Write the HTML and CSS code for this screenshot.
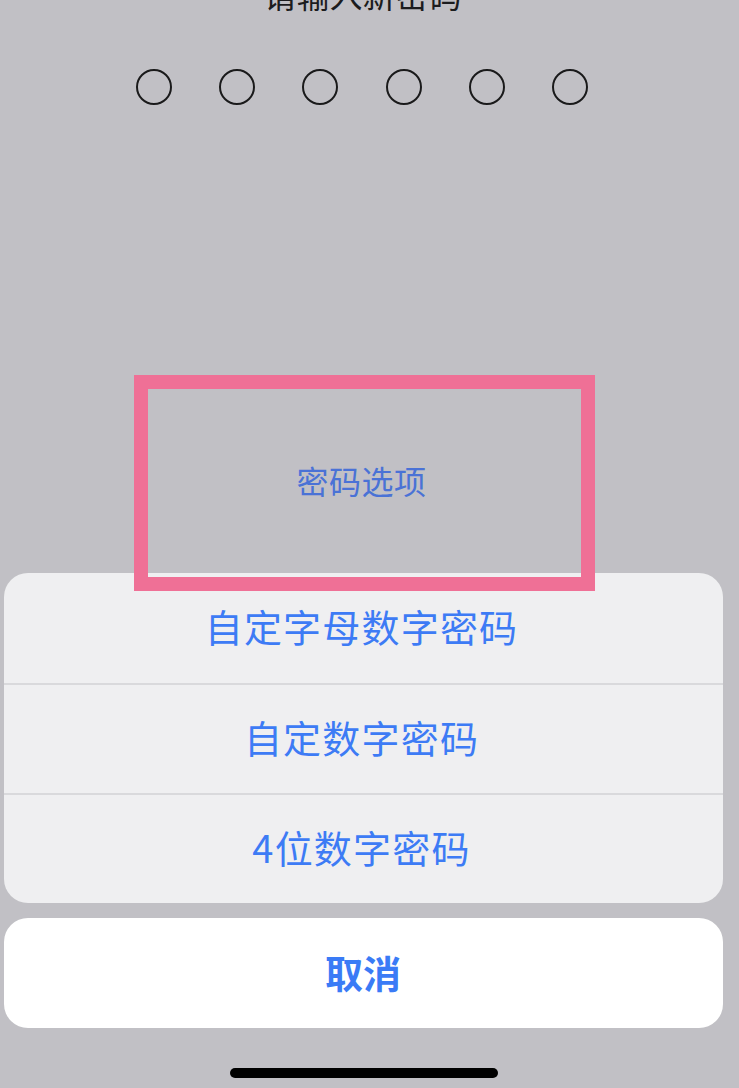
FILE: index.html
```html
<!DOCTYPE html>
<html lang="zh-CN">
<head>
<meta charset="utf-8">
<title>密码选项</title>
<link rel="stylesheet" href="styles.css">
</head>
<body>
<div class="screen">
  <div class="title">请输入新密码</div>
  <div class="dots">
    <span class="dot"></span>
    <span class="dot"></span>
    <span class="dot"></span>
    <span class="dot"></span>
    <span class="dot"></span>
    <span class="dot"></span>
  </div>
  <div class="sheet-header">密码选项</div>
  <div class="sheet">
    <div class="row">自定字母数字密码</div>
    <div class="row">自定数字密码</div>
    <div class="row">4位数字密码</div>
  </div>
  <div class="cancel">取消</div>
  <div class="home-indicator"></div>
  <div class="highlight"></div>
</div>
</body>
</html>
```
FILE: styles.css
```css
html, body {
  margin: 0;
  padding: 0;
  background: #c1c0c5;
}
.screen {
  position: relative;
  width: 739px;
  height: 1088px;
  overflow: hidden;
  background: #c1c0c5;
  display: flex;
  flex-direction: column;
  font-family: "Noto Sans CJK SC", "Noto Sans", sans-serif;
}
.title {
  margin-top: -22px;
  height: 33px;
  line-height: 33px;
  font-size: 33px;
  text-align: center;
  color: #1c1c1e;
  padding-right: 14px;
}
.dots {
  margin-top: 58px;
  display: flex;
  gap: 47.2px;
  padding-left: 136px;
}
.dot {
  width: 36px;
  height: 36px;
  box-sizing: border-box;
  border: 2.8px solid #1a1a1b;
  border-radius: 50%;
}
.sheet-header {
  margin-top: 321px;
  height: 111px;
  line-height: 108px;
  text-align: center;
  font-size: 32px;
  letter-spacing: 0.5px;
  color: #4a72d6;
  padding-right: 16px;
}
.sheet {
  margin-top: 36px;
  margin-left: 4px;
  width: 719px;
  background: #efeff1;
  border-radius: 24px;
  display: flex;
  flex-direction: column;
  overflow: hidden;
}
.row {
  height: 110px;
  line-height: 106px;
  text-align: center;
  font-size: 38px;
  letter-spacing: 1.2px;
  color: #3d7bf5;
  padding-right: 4px;
}
.row + .row {
  border-top: 2px solid #d9d9dc;
  height: 108px;
  line-height: 104px;
}
.cancel {
  margin-top: 15px;
  margin-left: 4px;
  width: 719px;
  height: 110px;
  line-height: 108px;
  background: #ffffff;
  border-radius: 24px;
  text-align: center;
  font-size: 38px;
  font-weight: 700;
  color: #3a7bf6;
  padding-right: 1px;
  box-sizing: border-box;
}
.home-indicator {
  margin-top: 40px;
  margin-left: 230px;
  width: 268px;
  height: 10px;
  border-radius: 5px;
  background: #000000;
}
.highlight {
  position: absolute;
  left: 134px;
  top: 375px;
  width: 461px;
  height: 216px;
  box-sizing: border-box;
  border: 14px solid #ef7096;
}
```
